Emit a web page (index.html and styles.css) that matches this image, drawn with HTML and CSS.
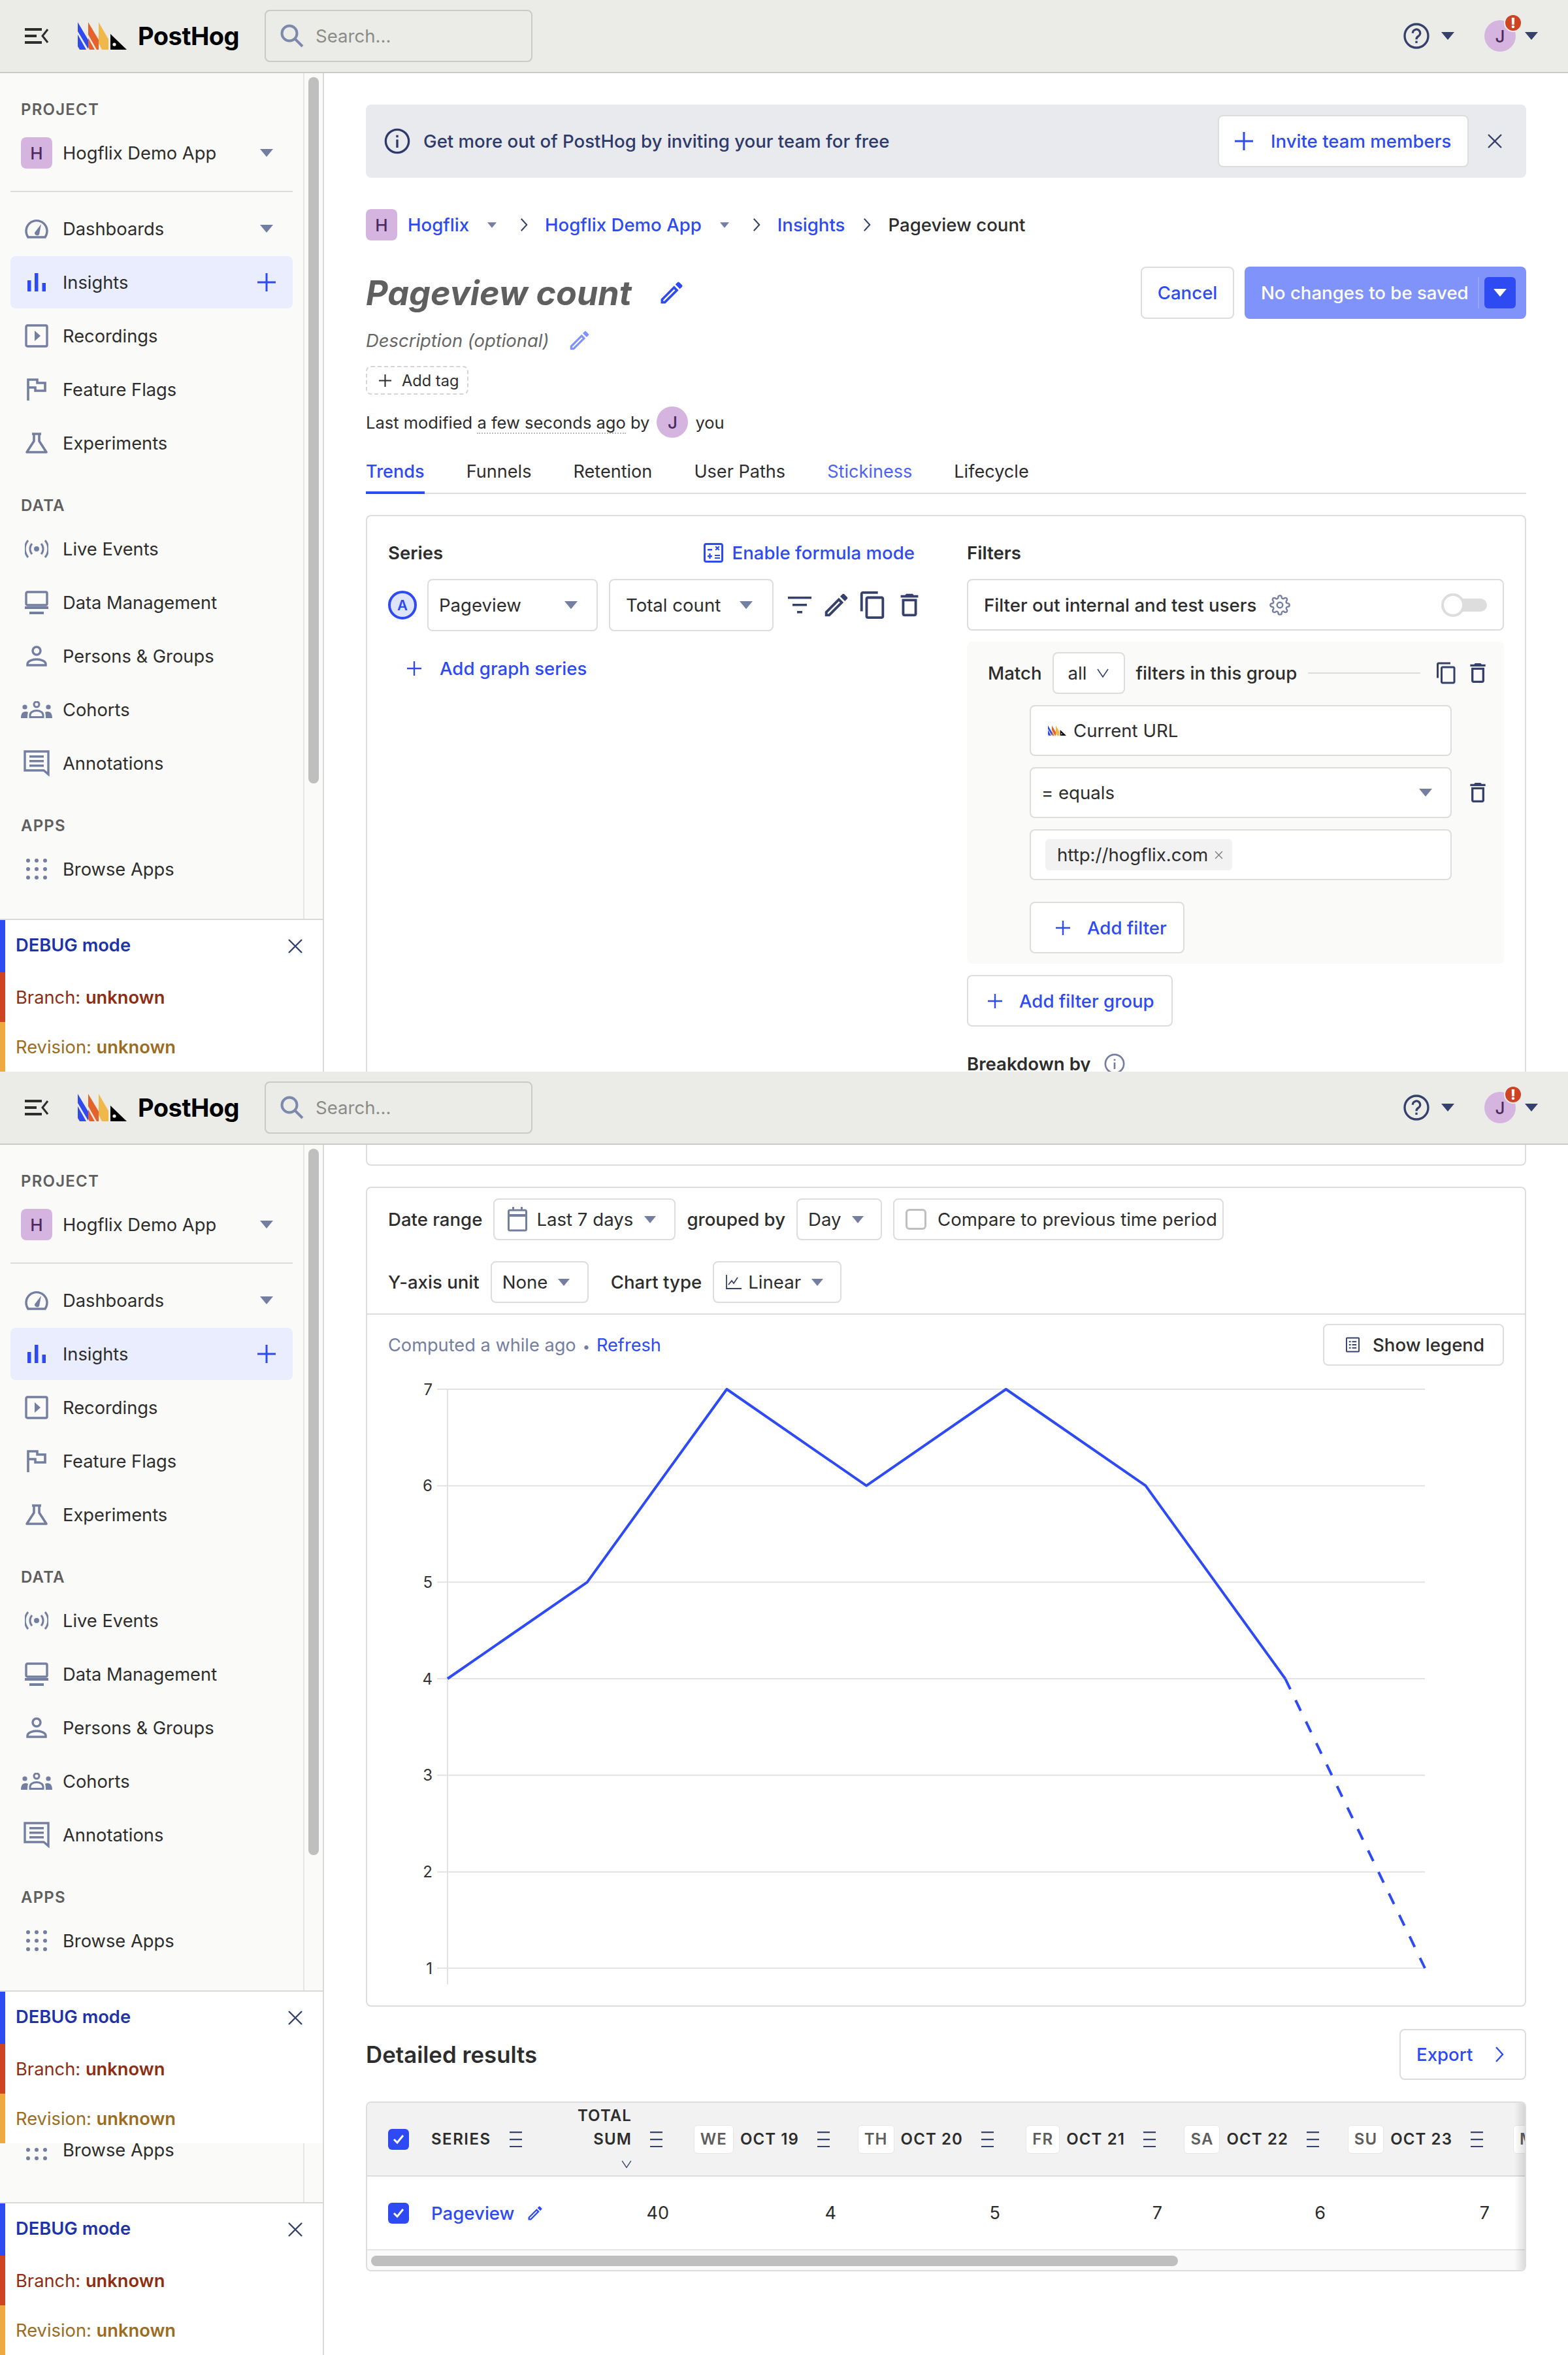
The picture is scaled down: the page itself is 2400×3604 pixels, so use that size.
FILE: index.html
```html
<!DOCTYPE html>
<html lang="en">
<head>
    <meta charset="UTF-8">
    <title>Pageview count - PostHog</title>
    <link rel="stylesheet" href="styles.css">
</head>
<body>
    <svg class="sprite" xmlns="http://www.w3.org/2000/svg">
        <symbol id="i-logo" viewBox="0 0 75 42">
            <path fill="#2f4bf0" d="M0 0l16 27v14L0 14zM0 19l13 23H3l-3-5z"/>
            <path fill="#e5622b" d="M16 0l16 27v15h-3L16 19zM16 24l10 18h-8l-2-4z"/>
            <path fill="#f0b84a" d="M32 0l15 26v16H37l-5-10z"/>
            <path fill="#000" d="M50 18l25 24H50z"/>
            <circle fill="#eceee9" cx="56" cy="34" r="2.6"/>
        </symbol>
        <symbol id="i-menu" viewBox="0 0 36 24">
            <path fill="currentColor" d="M0 0h26v4H0zM0 10h18v4H0zM0 20h26v4H0z"/>
            <path fill="none" stroke="currentColor" stroke-width="3" d="M35 2l-8 10 8 10"/>
        </symbol>
        <symbol id="i-search" viewBox="0 0 36 36">
            <circle cx="14" cy="14" r="11.5" fill="none" stroke="currentColor" stroke-width="4"/>
            <path stroke="currentColor" stroke-width="4" d="M22 22l12 12"/>
        </symbol>
        <symbol id="i-caret" viewBox="0 0 20 12"><path fill="currentColor" d="M0 0h20L10 12z"/></symbol>
        <symbol id="i-plus" viewBox="0 0 28 28"><path fill="currentColor" d="M12.5 0h3v12.5H28v3H15.5V28h-3V15.5H0v-3h12.5z"/></symbol>
        <symbol id="i-x" viewBox="0 0 24 24"><path fill="none" stroke="currentColor" stroke-width="2.4" d="M2 2l20 20M22 2L2 22"/></symbol>
        <symbol id="i-chevron" viewBox="0 0 14 26"><path fill="none" stroke="currentColor" stroke-width="2.4" d="M2 2l10 11L2 24"/></symbol>
        <symbol id="i-chev-down" viewBox="0 0 18 14"><path fill="none" stroke="currentColor" stroke-width="1.6" d="M1 1l8 12 8-12"/></symbol>
        <symbol id="i-info" viewBox="0 0 24 24">
            <circle cx="12" cy="12" r="10.6" fill="none" stroke="currentColor" stroke-width="2"/>
            <path fill="currentColor" d="M11 10.5h2V18h-2zM11 6.5h2v2h-2z"/>
        </symbol>
        <symbol id="i-help" viewBox="0 0 24 24">
            <circle cx="12" cy="12" r="10.8" fill="none" stroke="currentColor" stroke-width="2"/>
            <path fill="none" stroke="currentColor" stroke-width="2" d="M8.6 9.4a3.4 3.4 0 1 1 5.1 2.9c-1.1.7-1.7 1.4-1.7 2.9"/>
            <path fill="currentColor" d="M11 16.6h2v2h-2z"/>
        </symbol>
        <symbol id="i-gauge" viewBox="0 0 36 30">
            <path fill="none" stroke="currentColor" stroke-width="3.4" d="M5 28h26a16 16 0 1 0-26 0z"/>
            <path fill="currentColor" d="M15 21l10-13-3 16a4 4 0 0 1-7-3z"/>
        </symbol>
        <symbol id="i-bars" viewBox="0 0 28 28"><path fill="currentColor" d="M0 11h5.5v17H0zM11 0h5.500v28H11zM22.500 15H28v13h-5.500z"/></symbol>
        <symbol id="i-play" viewBox="0 0 36 36">
            <rect x="2" y="2" width="32" height="32" rx="2" fill="none" stroke="currentColor" stroke-width="3.4"/>
            <path fill="currentColor" d="M15 10l9 8-9 8z"/>
        </symbol>
        <symbol id="i-flag" viewBox="0 0 30 34">
            <path fill="none" stroke="currentColor" stroke-width="3.6" d="M2 34V2h14v5h12v12H13v-5H2"/>
        </symbol>
        <symbol id="i-flask" viewBox="0 0 36 32">
            <path fill="none" stroke="currentColor" stroke-width="3.6" stroke-linejoin="round" d="M11 2h14M14 2v11L3 30h30L22 13V2"/>
        </symbol>
        <symbol id="i-live" viewBox="0 0 36 30">
            <circle cx="18" cy="15" r="4" fill="currentColor"/>
            <path fill="none" stroke="currentColor" stroke-width="3" d="M11 7a12 12 0 0 0 0 16M25 7a12 12 0 0 1 0 16M5 2a20 20 0 0 0 0 26M31 2a20 20 0 0 1 0 26"/>
        </symbol>
        <symbol id="i-monitor" viewBox="0 0 36 36">
            <rect x="2" y="2" width="32" height="20" rx="2" fill="none" stroke="currentColor" stroke-width="3.400"/>
            <path fill="currentColor" d="M0 24h36v4H0zM7 32h22v4H7z"/>
        </symbol>
        <symbol id="i-person" viewBox="0 0 32 32">
            <circle cx="16" cy="8" r="6" fill="none" stroke="currentColor" stroke-width="3.4"/>
            <path fill="none" stroke="currentColor" stroke-width="3.4" d="M2 30v-2c0-4 7-7 14-7s14 3 14 7v2z"/>
        </symbol>
        <symbol id="i-cohort" viewBox="0 0 48 26">
            <circle cx="24" cy="5" r="4" fill="none" stroke="currentColor" stroke-width="3"/>
            <path fill="none" stroke="currentColor" stroke-width="3" d="M14 24.500v-3c0-4 4-7 10-7s10 3 10 7v3z"/>
            <circle cx="6" cy="9" r="3.600" fill="currentColor"/><circle cx="42" cy="9" r="3.600" fill="currentColor"/>
            <path fill="currentColor" d="M0 26c0-6 2-10 7-10 2 0 3 .5 4 1-1 3-1 6-1 9zM48 26c0-6-2-10-7-10-2 0-3 .5-4 1 1 3 1 6 1 9z"/>
        </symbol>
        <symbol id="i-note" viewBox="0 0 40 40">
            <path fill="none" stroke="currentColor" stroke-width="3.4" d="M2 2h36v35l-7-6H2z"/>
            <path fill="currentColor" d="M9 8h22v3.500H9zM9 15h22v3.500H9zM9 22h22v3.500H9z"/>
        </symbol>
        <symbol id="i-grid" viewBox="0 0 32 32">
            <g fill="currentColor">
                <circle cx="3" cy="3" r="3"/><circle cx="16" cy="3" r="3"/><circle cx="29" cy="3" r="3"/>
                <circle cx="3" cy="16" r="3"/><circle cx="16" cy="16" r="3"/><circle cx="29" cy="16" r="3"/>
                <circle cx="3" cy="29" r="3"/><circle cx="16" cy="29" r="3"/><circle cx="29" cy="29" r="3"/>
            </g>
        </symbol>
        <symbol id="i-pencil" viewBox="0 0 24 24"><path fill="currentColor" d="M3 17.250V21h3.750L17.810 9.940l-3.750-3.750L3 17.250zM5.920 19H5v-.92l9.060-9.060.92.92L5.920 19zM20.710 7.040c.39-.39.39-1.020 0-1.410l-2.340-2.340c-.2-.2-.45-.29-.71-.29s-.51.09-.7.28l-1.830 1.830 3.750 3.750 1.830-1.820z"/></symbol>
        <symbol id="i-copy" viewBox="0 0 24 24"><path fill="currentColor" d="M16 1H4c-1.100 0-2 .9-2 2v14h2V3h12V1zm3 4H8c-1.100 0-2 .9-2 2v14c0 1.100.9 2 2 2h11c1.100 0 2-.9 2-2V7c0-1.100-.9-2-2-2zm0 16H8V7h11v14z"/></symbol>
        <symbol id="i-trash" viewBox="0 0 24 24"><path fill="currentColor" d="M6 19c0 1.100.9 2 2 2h8c1.100 0 2-.9 2-2V7H6v12zM8 9h8v10H8V9zm7.500-5l-1-1h-5l-1 1H5v2h14V4z"/></symbol>
        <symbol id="i-filter" viewBox="0 0 36 26"><path fill="currentColor" d="M0 0h36v3.400H0zM7 11h22v3.400H7zM14 22h8v3.400h-8z"/></symbol>
        <symbol id="i-gear" viewBox="0 0 24 24">
            <circle cx="12" cy="12" r="3.200" fill="none" stroke="currentColor" stroke-width="1.800"/>
            <path fill="none" stroke="currentColor" stroke-width="1.800" d="M19.400 15a1.650 1.650 0 0 0 .33 1.820l.06.06a2 2 0 0 1 0 2.830 2 2 0 0 1-2.830 0l-.06-.06a1.650 1.650 0 0 0-1.820-.33 1.650 1.650 0 0 0-1 1.510V21a2 2 0 0 1-2 2 2 2 0 0 1-2-2v-.09A1.650 1.650 0 0 0 9 19.400a1.650 1.650 0 0 0-1.820.33l-.06.06a2 2 0 0 1-2.830 0 2 2 0 0 1 0-2.830l.06-.06a1.650 1.650 0 0 0 .33-1.820 1.650 1.650 0 0 0-1.510-1H3a2 2 0 0 1-2-2 2 2 0 0 1 2-2h.09A1.650 1.650 0 0 0 4.600 9a1.650 1.650 0 0 0-.33-1.820l-.06-.06a2 2 0 0 1 0-2.830 2 2 0 0 1 2.830 0l.06.06a1.650 1.650 0 0 0 1.820.33H9a1.650 1.650 0 0 0 1-1.510V3a2 2 0 0 1 2-2 2 2 0 0 1 2 2v.09a1.650 1.650 0 0 0 1 1.510 1.650 1.650 0 0 0 1.820-.33l.06-.06a2 2 0 0 1 2.830 0 2 2 0 0 1 0 2.830l-.06.06a1.650 1.650 0 0 0-.33 1.820V9a1.650 1.650 0 0 0 1.510 1H21a2 2 0 0 1 2 2 2 2 0 0 1-2 2h-.09a1.650 1.650 0 0 0-1.510 1z"/>
        </symbol>
        <symbol id="i-calc" viewBox="0 0 30 30">
            <rect x="1.500" y="1.500" width="27" height="27" rx="2.500" fill="none" stroke="currentColor" stroke-width="3"/>
            <path fill="currentColor" d="M6 9h7v2.400H6zM6 19h7v2.400H6zM8.300 16h2.400v8H8.300zM17 18h8v2H17zM17 22h8v2H17zM17.500 6l1.500-1.500 2 2 2-2L24.500 6l-2 2 2 2L23 11.500l-2-2-2 2L17.500 10l2-2z"/>
        </symbol>
        <symbol id="i-calendar" viewBox="0 0 30 38">
            <rect x="1.500" y="5" width="27" height="31" rx="2" fill="none" stroke="currentColor" stroke-width="3"/>
            <path fill="currentColor" d="M1.500 11h27v4h-27zM7 0h3v6H7zM20 0h3v6h-3z"/>
        </symbol>
        <symbol id="i-linechart" viewBox="0 0 24 22">
            <path fill="none" stroke="currentColor" stroke-width="1.800" d="M1 0v21h23M4 15l5-6 3 4 6-9"/>
        </symbol>
        <symbol id="i-legend" viewBox="0 0 22 24">
            <rect x="1" y="1" width="20" height="22" rx="1" fill="none" stroke="currentColor" stroke-width="2"/>
            <path fill="currentColor" d="M5 6h3v2H5zM10 6h7v2h-7zM5 11h3v2H5zM10 11h7v2h-7zM5 16h3v2H5zM10 16h7v2h-7z"/>
        </symbol>
        <symbol id="i-lines" viewBox="0 0 19 24"><path fill="currentColor" d="M0 0h19v2.200H0zM0 11h19v2.200H0zM0 22h19v2.200H0z"/></symbol>
        <symbol id="i-check" viewBox="0 0 18 16"><path fill="none" stroke="#fff" stroke-width="3" d="M2 8l5 5 9-11"/></symbol>
    </svg>

    <header class="topbar">
        <svg class="icon menu-icon"><use href="#i-menu"/></svg>
        <svg class="logo"><use href="#i-logo"/></svg>
        <span class="wordmark">PostHog</span>
        <div class="search">
            <svg class="icon search-icon"><use href="#i-search"/></svg>
            <span>Search...</span>
        </div>
        <div class="topbar-right">
            <svg class="icon help-icon"><use href="#i-help"/></svg>
            <svg class="icon top-caret"><use href="#i-caret"/></svg>
            <div class="avatar-wrap">
                <span class="avatar round">J</span>
                <span class="badge">!</span>
            </div>
            <svg class="icon top-caret"><use href="#i-caret"/></svg>
        </div>
    </header>

    <div class="shell first-shell">
        <aside class="sidebar">
            <div class="side-top">
                <nav class="side-nav">
                    <div class="side-label">PROJECT</div>
                    <a class="side-item">
                        <span class="avatar">H</span><span>Hogflix Demo App</span>
                        <svg class="icon side-caret"><use href="#i-caret"/></svg>
                    </a>
                    <div class="side-divider"></div>
                    <a class="side-item"><span class="side-icon"><svg class="icon ic-gauge"><use href="#i-gauge"/></svg></span><span>Dashboards</span><svg class="icon side-caret"><use href="#i-caret"/></svg></a>
                    <a class="side-item active"><span class="side-icon"><svg class="icon ic-bars"><use href="#i-bars"/></svg></span><span>Insights</span><svg class="icon side-plus"><use href="#i-plus"/></svg></a>
                    <a class="side-item"><span class="side-icon"><svg class="icon ic-36"><use href="#i-play"/></svg></span><span>Recordings</span></a>
                    <a class="side-item"><span class="side-icon"><svg class="icon ic-flag"><use href="#i-flag"/></svg></span><span>Feature Flags</span></a>
                    <a class="side-item"><span class="side-icon"><svg class="icon ic-flask"><use href="#i-flask"/></svg></span><span>Experiments</span></a>
                    <div class="side-label spaced">DATA</div>
                    <a class="side-item"><span class="side-icon"><svg class="icon ic-live"><use href="#i-live"/></svg></span><span>Live Events</span></a>
                    <a class="side-item"><span class="side-icon"><svg class="icon ic-36"><use href="#i-monitor"/></svg></span><span>Data Management</span></a>
                    <a class="side-item"><span class="side-icon"><svg class="icon ic-person"><use href="#i-person"/></svg></span><span>Persons &amp; Groups</span></a>
                    <a class="side-item"><span class="side-icon"><svg class="icon ic-cohort"><use href="#i-cohort"/></svg></span><span>Cohorts</span></a>
                    <a class="side-item"><span class="side-icon"><svg class="icon ic-note"><use href="#i-note"/></svg></span><span>Annotations</span></a>
                    <div class="side-label spaced">APPS</div>
                    <a class="side-item"><span class="side-icon"><svg class="icon ic-grid"><use href="#i-grid"/></svg></span><span>Browse Apps</span></a>
                </nav>
                <div class="side-track"><div class="side-thumb"></div></div>
            </div>
            <div class="debug">
                <div class="debug-row debug-title"><span>DEBUG mode</span><svg class="icon debug-x"><use href="#i-x"/></svg></div>
                <div class="debug-row debug-branch"><span>Branch:&nbsp;<b>unknown</b></span></div>
                <div class="debug-row debug-revision"><span>Revision:&nbsp;<b>unknown</b></span></div>
            </div>
        </aside>

        <main class="main">
            <div class="banner">
                <svg class="icon banner-icon"><use href="#i-info"/></svg>
                <span class="banner-text">Get more out of PostHog by inviting your team for free</span>
                <a class="btn invite-btn"><svg class="icon plus-28"><use href="#i-plus"/></svg>Invite team members</a>
                <svg class="icon banner-x"><use href="#i-x"/></svg>
            </div>

            <div class="crumbs">
                <span class="avatar">H</span>
                <a class="link crumb-first">Hogflix</a>
                <svg class="icon crumb-caret"><use href="#i-caret"/></svg>
                <svg class="icon crumb-chev"><use href="#i-chevron"/></svg>
                <a class="link">Hogflix Demo App</a>
                <svg class="icon crumb-caret"><use href="#i-caret"/></svg>
                <svg class="icon crumb-chev"><use href="#i-chevron"/></svg>
                <a class="link">Insights</a>
                <svg class="icon crumb-chev after-link"><use href="#i-chevron"/></svg>
                <span class="crumb-last">Pageview count</span>
            </div>

            <div class="title-row">
                <h1 class="title">Pageview count</h1>
                <svg class="icon title-pencil"><use href="#i-pencil"/></svg>
                <a class="btn cancel-btn">Cancel</a>
                <div class="save-btn">
                    <span>No changes to be saved</span>
                    <span class="save-sep"></span>
                    <span class="save-drop"><svg class="icon save-caret"><use href="#i-caret"/></svg></span>
                </div>
            </div>
            <div class="desc-row">
                <span>Description (optional)</span>
                <svg class="icon desc-pencil"><use href="#i-pencil"/></svg>
            </div>
            <div class="add-tag"><svg class="icon tag-plus"><use href="#i-plus"/></svg>Add tag</div>
            <div class="modified">
                <span>Last modified <span class="dotted">a few seconds ago</span> by</span>
                <span class="avatar round">J</span>
                <span>you</span>
            </div>

            <div class="tabs">
                <a class="tab current">Trends</a>
                <a class="tab">Funnels</a>
                <a class="tab">Retention</a>
                <a class="tab">User Paths</a>
                <a class="tab light">Stickiness</a>
                <a class="tab">Lifecycle</a>
            </div>

            <section class="card query-card">
                <div class="series-col">
                    <div class="col-head">
                        <span class="col-title">Series</span>
                        <a class="link formula"><svg class="icon ic-calc"><use href="#i-calc"/></svg>Enable formula mode</a>
                    </div>
                    <div class="series-row">
                        <span class="series-letter">A</span>
                        <div class="select pageview-select">Pageview<svg class="icon select-caret"><use href="#i-caret"/></svg></div>
                        <div class="select count-select">Total count<svg class="icon select-caret"><use href="#i-caret"/></svg></div>
                        <svg class="icon ic-filter"><use href="#i-filter"/></svg>
                        <svg class="icon dark-action"><use href="#i-pencil"/></svg>
                        <svg class="icon dark-action"><use href="#i-copy"/></svg>
                        <svg class="icon dark-action"><use href="#i-trash"/></svg>
                    </div>
                    <a class="link add-series"><svg class="icon plus-22"><use href="#i-plus"/></svg>Add graph series</a>
                </div>
                <div class="filters-col">
                    <div class="col-head"><span class="col-title">Filters</span></div>
                    <div class="box test-users">
                        <span>Filter out internal and test users</span>
                        <svg class="icon ic-gear"><use href="#i-gear"/></svg>
                        <span class="toggle"><span class="knob"></span></span>
                    </div>
                    <div class="group">
                        <div class="match-row">
                            <span>Match</span>
                            <div class="box all-select">all<svg class="icon chev-18"><use href="#i-chev-down"/></svg></div>
                            <span>filters in this group</span>
                            <span class="group-line"></span>
                            <svg class="icon group-copy"><use href="#i-copy"/></svg>
                            <svg class="icon group-trash"><use href="#i-trash"/></svg>
                        </div>
                        <div class="prop-row">
                            <div class="box prop-box url-box"><svg class="logo-tiny"><use href="#i-logo"/></svg>Current URL</div>
                        </div>
                        <div class="prop-row">
                            <div class="box prop-box equals-box">= equals<svg class="icon select-caret"><use href="#i-caret"/></svg></div>
                            <svg class="icon group-trash prop-trash"><use href="#i-trash"/></svg>
                        </div>
                        <div class="prop-row">
                            <div class="box prop-box value-box"><span class="chip">http://hogflix.com<svg class="icon chip-x"><use href="#i-x"/></svg></span></div>
                        </div>
                        <a class="btn add-filter"><svg class="icon plus-22"><use href="#i-plus"/></svg>Add filter</a>
                    </div>
                    <a class="btn add-group"><svg class="icon plus-22"><use href="#i-plus"/></svg>Add filter group</a>
                    <div class="breakdown"><span class="col-title">Breakdown by</span><svg class="icon ic-info-muted"><use href="#i-info"/></svg></div>
                </div>
            </section>
        </main>
    </div>

    <header class="topbar">
        <svg class="icon menu-icon"><use href="#i-menu"/></svg>
        <svg class="logo"><use href="#i-logo"/></svg>
        <span class="wordmark">PostHog</span>
        <div class="search">
            <svg class="icon search-icon"><use href="#i-search"/></svg>
            <span>Search...</span>
        </div>
        <div class="topbar-right">
            <svg class="icon help-icon"><use href="#i-help"/></svg>
            <svg class="icon top-caret"><use href="#i-caret"/></svg>
            <div class="avatar-wrap">
                <span class="avatar round">J</span>
                <span class="badge">!</span>
            </div>
            <svg class="icon top-caret"><use href="#i-caret"/></svg>
        </div>
    </header>

    <div class="shell">
        <div class="side-stack">
            <aside class="sidebar second-side">
                <div class="side-top">
                    <nav class="side-nav">
                        <div class="side-label">PROJECT</div>
                        <a class="side-item">
                            <span class="avatar">H</span><span>Hogflix Demo App</span>
                            <svg class="icon side-caret"><use href="#i-caret"/></svg>
                        </a>
                        <div class="side-divider"></div>
                        <a class="side-item"><span class="side-icon"><svg class="icon ic-gauge"><use href="#i-gauge"/></svg></span><span>Dashboards</span><svg class="icon side-caret"><use href="#i-caret"/></svg></a>
                        <a class="side-item active"><span class="side-icon"><svg class="icon ic-bars"><use href="#i-bars"/></svg></span><span>Insights</span><svg class="icon side-plus"><use href="#i-plus"/></svg></a>
                        <a class="side-item"><span class="side-icon"><svg class="icon ic-36"><use href="#i-play"/></svg></span><span>Recordings</span></a>
                        <a class="side-item"><span class="side-icon"><svg class="icon ic-flag"><use href="#i-flag"/></svg></span><span>Feature Flags</span></a>
                        <a class="side-item"><span class="side-icon"><svg class="icon ic-flask"><use href="#i-flask"/></svg></span><span>Experiments</span></a>
                        <div class="side-label spaced">DATA</div>
                        <a class="side-item"><span class="side-icon"><svg class="icon ic-live"><use href="#i-live"/></svg></span><span>Live Events</span></a>
                        <a class="side-item"><span class="side-icon"><svg class="icon ic-36"><use href="#i-monitor"/></svg></span><span>Data Management</span></a>
                        <a class="side-item"><span class="side-icon"><svg class="icon ic-person"><use href="#i-person"/></svg></span><span>Persons &amp; Groups</span></a>
                        <a class="side-item"><span class="side-icon"><svg class="icon ic-cohort"><use href="#i-cohort"/></svg></span><span>Cohorts</span></a>
                        <a class="side-item"><span class="side-icon"><svg class="icon ic-note"><use href="#i-note"/></svg></span><span>Annotations</span></a>
                        <div class="side-label spaced">APPS</div>
                        <a class="side-item"><span class="side-icon"><svg class="icon ic-grid"><use href="#i-grid"/></svg></span><span>Browse Apps</span></a>
                    </nav>
                    <div class="side-track"><div class="side-thumb"></div></div>
                </div>
                <div class="debug">
                    <div class="debug-row debug-title"><span>DEBUG mode</span><svg class="icon debug-x"><use href="#i-x"/></svg></div>
                    <div class="debug-row debug-branch"><span>Branch:&nbsp;<b>unknown</b></span></div>
                    <div class="debug-row debug-revision"><span>Revision:&nbsp;<b>unknown</b></span></div>
                </div>
            </aside>
            <aside class="sidebar tail-side">
                <div class="side-top">
                    <nav class="side-nav tail-nav">
                        <a class="side-item"><span class="side-icon"><svg class="icon ic-grid"><use href="#i-grid"/></svg></span><span>Browse Apps</span></a>
                    </nav>
                    <div class="side-track"></div>
                </div>
                <div class="debug">
                    <div class="debug-row debug-title"><span>DEBUG mode</span><svg class="icon debug-x"><use href="#i-x"/></svg></div>
                    <div class="debug-row debug-branch"><span>Branch:&nbsp;<b>unknown</b></span></div>
                    <div class="debug-row debug-revision"><span>Revision:&nbsp;<b>unknown</b></span></div>
                </div>
            </aside>
        </div>

        <main class="main scrolled">
            <div class="card card-tail"></div>

            <section class="card chart-card">
                <div class="chart-filters">
                    <div class="chart-filter-row">
                        <span class="filter-label">Date range</span>
                        <div class="select small range-select"><svg class="icon ic-calendar"><use href="#i-calendar"/></svg>Last 7 days<svg class="icon small-caret"><use href="#i-caret"/></svg></div>
                        <span class="filter-label">grouped by</span>
                        <div class="select small day-select">Day<svg class="icon small-caret"><use href="#i-caret"/></svg></div>
                        <div class="select small compare"><span class="checkbox-empty"></span>Compare to previous time period</div>
                    </div>
                    <div class="chart-filter-row">
                        <span class="filter-label">Y-axis unit</span>
                        <div class="select small none-select">None<svg class="icon small-caret"><use href="#i-caret"/></svg></div>
                        <span class="filter-label chart-type">Chart type</span>
                        <div class="select small linear-select"><svg class="icon ic-line"><use href="#i-linechart"/></svg>Linear<svg class="icon small-caret"><use href="#i-caret"/></svg></div>
                    </div>
                </div>
                <div class="computed-row">
                    <span class="computed">Computed a while ago<span class="computed-dot">&bull;</span><a class="refresh">Refresh</a></span>
                    <div class="select small legend-btn"><svg class="icon ic-legend"><use href="#i-legend"/></svg>Show legend</div>
                </div>
                <svg class="chart" viewBox="562 2100 1772 960" xmlns="http://www.w3.org/2000/svg">
                    <g class="grid-lines">
                        <path d="M669 2126H2181M669 2273.700H2181M669 2421.300H2181M669 2569H2181M669 2716.700H2181M669 2864.700H2181M669 3012H2181"/>
                        <path d="M685 2126V3037"/>
                    </g>
                    <g class="chart-labels">
                        <text x="662" y="2135">7</text>
                        <text x="662" y="2282">6</text>
                        <text x="662" y="2430">5</text>
                        <text x="662" y="2578">4</text>
                        <text x="662" y="2725">3</text>
                        <text x="662" y="2873">2</text>
                        <text x="662" y="3021">1</text>
                    </g>
                    <polyline class="series-line" points="685,2569 898.700,2421.300 1112.400,2126 1326.100,2273.700 1539.800,2126 1753.500,2273.700 1967.200,2569"/>
                    <polyline class="series-line dashed" points="1967.200,2569 2181,3012"/>
                </svg>
            </section>

            <div class="results-head">
                <h2 class="results-title">Detailed results</h2>
                <a class="btn export-btn">Export<svg class="icon export-chev"><use href="#i-chevron"/></svg></a>
            </div>

            <div class="table">
                <div class="table-row table-head">
                    <div class="cell series-cell">
                        <span class="checkbox"><svg class="check"><use href="#i-check"/></svg></span>
                        <span>SERIES</span>
                        <svg class="icon ham"><use href="#i-lines"/></svg>
                    </div>
                    <div class="cell head-cell">
                        <span class="total-label">TOTAL<br>SUM<br><svg class="icon chev-16"><use href="#i-chev-down"/></svg></span>
                        <svg class="icon ham"><use href="#i-lines"/></svg>
                    </div>
                    <div class="cell head-cell"><span class="day-chip">WE</span><span>OCT 19</span><svg class="icon ham"><use href="#i-lines"/></svg></div>
                    <div class="cell head-cell"><span class="day-chip">TH</span><span>OCT 20</span><svg class="icon ham"><use href="#i-lines"/></svg></div>
                    <div class="cell head-cell"><span class="day-chip">FR</span><span>OCT 21</span><svg class="icon ham"><use href="#i-lines"/></svg></div>
                    <div class="cell head-cell"><span class="day-chip">SA</span><span>OCT 22</span><svg class="icon ham"><use href="#i-lines"/></svg></div>
                    <div class="cell head-cell"><span class="day-chip">SU</span><span>OCT 23</span><svg class="icon ham"><use href="#i-lines"/></svg></div>
                    <div class="cell next-cell"><span class="day-chip">MO</span></div>
                </div>
                <div class="table-row table-body">
                    <div class="cell series-cell">
                        <span class="checkbox"><svg class="check"><use href="#i-check"/></svg></span>
                        <a class="link row-link">Pageview</a>
                        <svg class="icon row-pencil"><use href="#i-pencil"/></svg>
                    </div>
                    <div class="cell value-cell">40</div>
                    <div class="cell value-cell">4</div>
                    <div class="cell value-cell">5</div>
                    <div class="cell value-cell">7</div>
                    <div class="cell value-cell">6</div>
                    <div class="cell value-cell">7</div>
                    <div class="cell"></div>
                </div>
                <div class="table-scroll"><div class="table-thumb"></div></div>
                <div class="table-shadow"></div>
            </div>
        </main>
    </div>
</body>
</html>
```

FILE: styles.css
```css
* {
    box-sizing: border-box;
}

body {
    margin: 0;
    width: 2400px;
    font-family: Inter, "Liberation Sans", sans-serif;
    font-size: 27.6px;
    color: #2d2d2d;
    background: #fff;
    white-space: nowrap;
}

.sprite {
    display: none;
}

.icon {
    display: block;
    flex: none;
    overflow: visible;
}

.link {
    color: #2d4af3;
    font-weight: 500;
}

/* top bar */
.topbar {
    display: flex;
    align-items: center;
    height: 112px;
    padding: 0 46px 0 38px;
    background: #ebece8;
    border-bottom: 2px solid #c9c9c5;
}

.menu-icon {
    width: 36px;
    height: 24px;
    color: #2d2d2d;
}

.logo {
    width: 75px;
    height: 42px;
    margin-left: 45px;
    flex: none;
}

.wordmark {
    width: 155px;
    margin-left: 17px;
    font-size: 38px;
    font-weight: 700;
    letter-spacing: -0.5px;
    color: #000;
}

.search {
    display: flex;
    align-items: center;
    width: 410px;
    height: 80px;
    margin-left: 39px;
    padding-left: 22px;
    border: 2px solid #c9c9c5;
    border-radius: 8px;
    color: #8b8b88;
}

.search-icon {
    width: 36px;
    height: 36px;
    margin-right: 18px;
    color: #7c89ad;
}

.topbar-right {
    display: flex;
    align-items: center;
    margin-left: auto;
}

.help-icon {
    width: 40px;
    height: 40px;
    color: #35416b;
}

.top-caret {
    width: 20px;
    height: 12px;
    margin-left: 18px;
    color: #35416b;
}

.avatar {
    display: flex;
    align-items: center;
    justify-content: center;
    flex: none;
    width: 48px;
    height: 48px;
    border-radius: 8px;
    background: #d5b4e0;
    color: #4b2a60;
    font-weight: 500;
    font-size: 26px;
}

.avatar.round {
    border-radius: 50%;
}

.avatar-wrap {
    position: relative;
    margin-left: 46px;
}

.avatar-wrap + .top-caret {
    margin-left: 14px;
}

.badge {
    position: absolute;
    top: -10px;
    right: -10px;
    display: flex;
    align-items: center;
    justify-content: center;
    width: 28px;
    height: 28px;
    border: 2px solid #ebece8;
    border-radius: 50%;
    background: #cd4425;
    color: #fff;
    font-size: 22px;
    font-weight: 800;
}

/* layout */
.shell {
    display: flex;
    height: 1852px;
    overflow: hidden;
}

.first-shell {
    height: 1528px;
}

.side-stack {
    display: flex;
    flex-direction: column;
    flex: none;
    width: 496px;
}

/* sidebar */
.sidebar {
    display: flex;
    flex-direction: column;
    flex: none;
    width: 496px;
    height: 100%;
    border-right: 2px solid #d9d9d9;
    font-size: 27.3px;
}

.second-side {
    height: 1528px;
}

.tail-side {
    height: 324px;
}

.side-top {
    display: flex;
    flex: 1;
    min-height: 0;
}

.side-nav {
    display: flex;
    flex-direction: column;
    width: 466px;
    padding: 44px 16px 0;
    overflow: hidden;
    background: #fafaf8;
    border-right: 2px solid #e6e6e4;
}

.tail-nav {
    justify-content: flex-end;
    padding-top: 0;
    padding-bottom: 38px;
}

.tail-nav .side-item {
    flex: none;
}

.side-track {
    flex: 1;
    padding: 6px;
    background: #fafaf8;
}

.side-thumb {
    height: 1081px;
    border-radius: 8px;
    background: #bfbfbf;
}

.side-label {
    flex: none;
    height: 24px;
    margin: 0 0 14px 16px;
    font-size: 24px;
    line-height: 24px;
    font-weight: 600;
    letter-spacing: 1.2px;
    color: #5f5f5f;
}

.side-label.spaced {
    margin-top: 42px;
}

.side-item {
    display: flex;
    align-items: center;
    flex: none;
    gap: 16px;
    height: 80px;
    margin-bottom: 2px;
    padding: 0 16px;
    border-radius: 8px;
}

.side-item.active {
    background: #e9edfd;
}

.side-icon {
    display: flex;
    align-items: center;
    justify-content: center;
    flex: none;
    width: 48px;
    height: 48px;
    color: #747ea1;
}

.side-caret {
    width: 20px;
    height: 12px;
    margin-left: auto;
    margin-right: 14px;
    color: #747ea1;
}

.side-plus {
    width: 28px;
    height: 28px;
    margin-left: auto;
    margin-right: 10px;
    color: #2d4af3;
}

.side-divider {
    flex: none;
    height: 2px;
    margin: 16px 0;
    background: #dcdcdc;
}

.ic-gauge {
    width: 36px;
    height: 30px;
}

.ic-bars {
    width: 28px;
    height: 28px;
    color: #2d4af3;
}

.ic-36 {
    width: 36px;
    height: 36px;
}

.ic-flag {
    width: 30px;
    height: 34px;
}

.ic-flask {
    width: 36px;
    height: 32px;
}

.ic-live {
    width: 36px;
    height: 30px;
}

.ic-person {
    width: 32px;
    height: 32px;
}

.ic-cohort {
    width: 48px;
    height: 26px;
}

.ic-note {
    width: 40px;
    height: 40px;
}

.ic-grid {
    width: 32px;
    height: 32px;
}

/* debug panel */
.debug {
    flex: none;
    height: 234px;
    background: #fff;
    border-top: 2px solid #d9d9d9;
}

.debug-row {
    display: flex;
    align-items: center;
    height: 76px;
    padding: 0 30px 0 16px;
    border-left: 8px solid;
}

.debug-row b {
    font-weight: 600;
}

.debug-title {
    justify-content: space-between;
    height: 80px;
    border-left-color: #2d4af3;
    color: #1d33a8;
    font-weight: 600;
}

.debug-title span {
    margin-bottom: 4px;
}

.debug-x {
    width: 24px;
    height: 24px;
    color: #35416b;
}

.debug-branch {
    border-left-color: #cd4425;
    color: #8f2d12;
}

.debug-revision {
    border-left-color: #eeaa3e;
    color: #9c6c1f;
}

/* main column */
.main {
    flex: 1;
    min-width: 0;
    padding: 48px 64px 0;
    overflow: hidden;
}

.main.scrolled {
    padding-top: 0;
}

.btn {
    display: flex;
    align-items: center;
    height: 80px;
    background: #fff;
    border: 2px solid #ddd;
    border-radius: 8px;
    color: #2d4af3;
    font-weight: 500;
}

.banner {
    display: flex;
    align-items: center;
    height: 112px;
    padding: 0 36px 0 28px;
    background: #e9eaee;
    border-radius: 8px;
}

.banner-icon {
    width: 40px;
    height: 40px;
    color: #2d3a6a;
}

.banner-text {
    margin-left: 20px;
    font-weight: 500;
    color: #2d3a6a;
}

.invite-btn {
    width: 384px;
    margin-left: auto;
    padding-left: 24px;
}

.plus-28 {
    width: 28px;
    height: 28px;
    margin-right: 27px;
}

.banner-x {
    width: 24px;
    height: 24px;
    margin-left: 28px;
    color: #35416b;
}

.crumbs {
    display: flex;
    align-items: center;
    height: 48px;
    margin-top: 48px;
}

.crumb-first {
    margin-left: 16px;
}

.crumb-caret {
    width: 14px;
    height: 9px;
    margin: 0 36px 0 28px;
    color: #747ea1;
}

.crumb-chev {
    width: 12px;
    height: 22px;
    margin-right: 26px;
    color: #35416b;
}

.crumb-chev.after-link {
    margin-left: 28px;
}

.crumb-last {
    font-weight: 500;
}

.title-row {
    display: flex;
    align-items: center;
    height: 80px;
    margin-top: 40px;
}

.title {
    margin: 0;
    font-size: 52px;
    font-style: italic;
    font-weight: 700;
    color: #5f5f5f;
}

.title-pencil {
    width: 44px;
    height: 44px;
    margin-left: 39px;
    color: #2d4af3;
}

.cancel-btn {
    justify-content: center;
    width: 143px;
    margin-left: auto;
}

.save-btn {
    display: flex;
    align-items: center;
    width: 431px;
    height: 80px;
    margin-left: 16px;
    padding-left: 25px;
    background: #8093fa;
    border-radius: 8px;
    color: #fff;
    font-weight: 500;
}

.save-sep {
    width: 2px;
    height: 48px;
    margin-left: auto;
    background: #95a5fb;
}

.save-drop {
    display: flex;
    align-items: center;
    justify-content: center;
    width: 48px;
    height: 48px;
    margin: 0 16px 0 8px;
    background: #2d4af3;
    border-radius: 6px;
}

.save-caret {
    width: 20px;
    height: 12px;
    color: #fff;
}

.desc-row {
    display: flex;
    align-items: center;
    height: 40px;
    margin-top: 13px;
    font-size: 27.4px;
    font-style: italic;
    color: #666;
}

.desc-pencil {
    width: 38px;
    height: 38px;
    margin-left: 28px;
    color: #8093fa;
}

.add-tag {
    display: flex;
    align-items: center;
    width: 157px;
    height: 44px;
    margin-top: 19px;
    padding-left: 18px;
    border: 2px dashed #d5d5d5;
    border-radius: 8px;
    font-size: 23.6px;
}

.tag-plus {
    width: 19px;
    height: 19px;
    margin-right: 16px;
}

.modified {
    display: flex;
    align-items: center;
    height: 48px;
    margin-top: 18px;
    gap: 11px;
    font-size: 25.5px;
}

.dotted {
    border-bottom: 2px dotted #bbb;
}

.tabs {
    display: flex;
    gap: 64px;
    margin-top: 32px;
    border-bottom: 2px solid #ddd;
    font-size: 27.1px;
}

.tab {
    height: 54px;
    margin-bottom: -2px;
    line-height: 40px;
}

.tab.current {
    color: #2d4af3;
    font-weight: 500;
    border-bottom: 4px solid #2d4af3;
}

.tab.light {
    color: #4a63f4;
}

/* cards */
.card {
    background: #fff;
    border: 2px solid #ddd;
    border-radius: 8px;
}

.query-card {
    display: flex;
    gap: 74px;
    margin-top: 32px;
    padding: 36px 32px 60px;
}

.series-col {
    flex: none;
    width: 812px;
}

.filters-col {
    flex: none;
    width: 822px;
}

.col-head {
    display: flex;
    align-items: center;
    justify-content: space-between;
    height: 40px;
}

.col-title {
    font-weight: 600;
}

.formula {
    display: flex;
    align-items: center;
    margin-right: 6px;
}

.ic-calc {
    width: 30px;
    height: 30px;
    margin-right: 14px;
}

.series-row {
    display: flex;
    align-items: center;
    margin-top: 20px;
}

.series-letter {
    display: flex;
    align-items: center;
    justify-content: center;
    flex: none;
    width: 44px;
    height: 44px;
    margin-right: 16px;
    border: 4px solid #2d4af3;
    border-radius: 50%;
    background: #dfe4fd;
    color: #2d4af3;
    font-size: 22px;
    font-weight: 600;
}

.select {
    display: flex;
    align-items: center;
    flex: none;
    height: 80px;
    background: #fff;
    border: 2px solid #ddd;
    border-radius: 8px;
}

.select-caret {
    width: 20px;
    height: 12px;
    margin-left: auto;
    color: #747ea1;
}

.pageview-select {
    width: 261px;
    padding: 0 29px 0 16px;
}

.count-select {
    width: 252px;
    margin-left: 17px;
    padding: 0 30px 0 24px;
}

.ic-filter {
    width: 36px;
    height: 26px;
    margin-left: 22px;
    margin-right: 15px;
    color: #35416b;
}

.dark-action {
    width: 46px;
    height: 46px;
    margin-right: 10px;
    color: #35416b;
}

.add-series {
    display: flex;
    align-items: center;
    height: 80px;
    margin-top: 17px;
    padding-left: 29px;
}

.plus-22 {
    width: 22px;
    height: 22px;
    margin-right: 28px;
    color: #2d4af3;
}

.btn .plus-22 {
    margin-right: 26px;
}

.box {
    display: flex;
    align-items: center;
    background: #fff;
    border: 2px solid #ddd;
    border-radius: 8px;
}

.test-users {
    height: 79px;
    margin-top: 20px;
    padding: 0 24px;
    font-weight: 500;
}

.ic-gear {
    width: 32px;
    height: 32px;
    margin-left: 20px;
    color: #747ea1;
}

.toggle {
    position: relative;
    width: 70px;
    height: 20px;
    margin-left: auto;
    background: #ddd;
    border-radius: 10px;
}

.knob {
    position: absolute;
    top: -8px;
    left: 0;
    width: 36px;
    height: 36px;
    background: #fff;
    border: 4px solid #ddd;
    border-radius: 50%;
}

.group {
    margin-top: 17px;
    padding: 16px 28px 16px 32px;
    background: #fafaf8;
    border-radius: 8px;
}

.match-row {
    display: flex;
    align-items: center;
    height: 64px;
    margin-bottom: 2px;
    font-weight: 500;
}

.all-select {
    width: 111px;
    height: 64px;
    margin: 0 17px 0 16px;
    padding-left: 22px;
    font-weight: 400;
}

.chev-18 {
    width: 18px;
    height: 14px;
    margin-left: auto;
    margin-right: 23px;
    color: #35416b;
}

.group-line {
    flex: 1;
    height: 2px;
    margin: 0 22px 0 17px;
    background: #ddd;
}

.group-copy {
    width: 36px;
    height: 36px;
    margin-right: 10px;
    color: #35416b;
}

.group-trash {
    width: 40px;
    height: 40px;
    margin-right: -8px;
    color: #35416b;
}

.prop-row {
    display: flex;
    align-items: center;
    margin: 17px 0 0 64px;
}

.prop-box {
    flex: none;
    width: 646px;
    height: 78px;
}

.prop-trash {
    margin-left: 20px;
}

.url-box {
    padding-left: 26px;
}

.logo-tiny {
    width: 28px;
    height: 16px;
    margin-right: 11px;
}

.equals-box {
    padding: 0 28px 0 16px;
}

.value-box {
    padding-left: 22px;
}

.chip {
    display: flex;
    align-items: center;
    height: 48px;
    padding: 0 14px 0 18px;
    background: #f2f2f2;
    border-radius: 6px;
}

.chip-x {
    width: 13px;
    height: 13px;
    margin-left: 10px;
    color: #777;
}

.add-filter {
    width: 237px;
    height: 79px;
    margin: 33px 0 0 64px;
    padding-left: 38px;
}

.add-group {
    width: 315px;
    height: 79px;
    margin-top: 17px;
    padding-left: 30px;
}

.breakdown {
    display: flex;
    align-items: center;
    gap: 20px;
    height: 40px;
    margin-top: 37px;
}

.ic-info-muted {
    width: 32px;
    height: 32px;
    color: #747ea1;
}

/* chart card */
.card-tail {
    height: 32px;
    border-top: none;
    border-radius: 0 0 8px 8px;
}

.chart-card {
    margin-top: 32px;
}

.chart-filters {
    padding: 16px 32px;
    border-bottom: 2px solid #ddd;
}

.chart-filter-row {
    display: flex;
    align-items: center;
    gap: 17px;
}

.chart-filter-row + .chart-filter-row {
    margin-top: 32px;
}

.filter-label {
    font-weight: 500;
}

.chart-type {
    margin-left: 17px;
}

.select.small {
    height: 64px;
}

.small-caret {
    width: 18px;
    height: 11px;
    margin-left: auto;
    color: #747ea1;
}

.range-select {
    width: 279px;
    padding: 0 28px 0 20px;
}

.ic-calendar {
    width: 30px;
    height: 38px;
    margin-right: 14px;
    color: #747ea1;
}

.day-select {
    width: 131px;
    padding: 0 26px 0 16px;
}

.compare {
    width: 506px;
    padding-left: 17px;
}

.checkbox-empty {
    width: 32px;
    height: 32px;
    margin-right: 17px;
    border: 3px solid #bfbfbf;
    border-radius: 6px;
}

.none-select {
    width: 150px;
    padding: 0 27px 0 16px;
}

.linear-select {
    width: 197px;
    padding: 0 26px 0 18px;
}

.ic-line {
    width: 24px;
    height: 22px;
    margin-right: 10px;
    color: #35416b;
}

.computed-row {
    display: flex;
    align-items: center;
    justify-content: space-between;
    margin-top: 14px;
    padding: 0 32px;
}

.computed {
    font-size: 27.2px;
    color: #747ea1;
}

.computed-dot {
    margin: 0 10px;
    font-size: 20px;
}

.refresh {
    color: #2d4af3;
}

.legend-btn {
    width: 277px;
    padding-left: 33px;
    font-weight: 500;
}

.ic-legend {
    width: 21px;
    height: 24px;
    margin-right: 20px;
    color: #35416b;
}

.chart {
    display: block;
    width: 1772px;
    height: 960px;
    margin-top: 10px;
    margin-bottom: 9px;
}

.grid-lines path {
    fill: none;
    stroke: #e3e3e3;
    stroke-width: 2;
}

.chart-labels text {
    font-size: 24px;
    fill: #333;
    text-anchor: end;
}

.series-line {
    fill: none;
    stroke: #2d4af3;
    stroke-width: 4;
    stroke-linejoin: round;
}

.series-line.dashed {
    stroke-dasharray: 18 18.5;
}

/* results */
.results-head {
    display: flex;
    align-items: center;
    justify-content: space-between;
    margin-top: 34px;
}

.results-title {
    margin: 0;
    font-size: 34.800px;
    font-weight: 600;
}

.export-btn {
    width: 194px;
    height: 78px;
    padding: 0 32px 0 24px;
}

.export-chev {
    width: 14px;
    height: 26px;
    margin-left: auto;
    color: #2d4af3;
}

.table {
    position: relative;
    height: 260px;
    margin-top: 33px;
    overflow: hidden;
    background: #fff;
    border: 2px solid #ddd;
    border-radius: 8px;
}

.table-row {
    display: grid;
    grid-template-columns: 316px 178px 256px 251px 248px 250px 251px 60px;
    width: 1810px;
}

.table-head {
    height: 113px;
    background: #f2f2f2;
    border-bottom: 2px solid #ddd;
    font-size: 24px;
    font-weight: 600;
    letter-spacing: 1.5px;
}

.table-body {
    height: 113px;
    border-bottom: 2px solid #e6e6e6;
}

.cell {
    display: flex;
    align-items: center;
}

.series-cell {
    padding-left: 32px;
}

.head-cell {
    justify-content: flex-end;
    padding-right: 42px;
    letter-spacing: 1.1px;
}

.next-cell {
    padding-left: 4px;
}

.value-cell {
    justify-content: flex-end;
    padding-right: 32px;
    font-size: 27px;
}

.checkbox {
    display: flex;
    align-items: center;
    justify-content: center;
    flex: none;
    width: 32px;
    height: 32px;
    margin-right: 34px;
    background: #2d4af3;
    border-radius: 6px;
}

.check {
    width: 18px;
    height: 16px;
}

.ham {
    width: 19px;
    height: 24px;
    margin-left: 28px;
    color: #35416b;
}

.total-label {
    line-height: 36px;
    text-align: right;
}

.chev-16 {
    display: inline-block;
    width: 16px;
    height: 12px;
    color: #35416b;
}

.day-chip {
    display: flex;
    align-items: center;
    flex: none;
    height: 44px;
    margin-right: 10px;
    padding: 0 9px;
    background: #fff;
    border: 1px solid #e6e6e6;
    border-radius: 6px;
    color: #5f5f5f;
}

.row-pencil {
    width: 28px;
    height: 28px;
    margin-left: 18px;
    color: #2d4af3;
}

.table-scroll {
    height: 30px;
    padding: 8px 6px;
    background: #fafafa;
}

.table-thumb {
    width: 1235px;
    height: 16px;
    border-radius: 8px;
    background: #bfbfbf;
}

.table-shadow {
    position: absolute;
    top: 0;
    right: 0;
    bottom: 0;
    width: 16px;
    background: linear-gradient(to right, rgba(0, 0, 0, 0), rgba(0, 0, 0, 0.12));
}
```
